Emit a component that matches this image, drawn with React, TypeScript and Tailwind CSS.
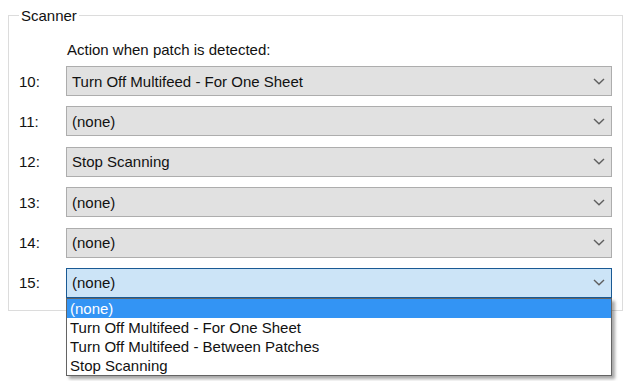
import React from 'react';

const rows: { n: string; value: string }[] = [
  { n: '10:', value: 'Turn Off Multifeed - For One Sheet' },
  { n: '11:', value: '(none)' },
  { n: '12:', value: 'Stop Scanning' },
  { n: '13:', value: '(none)' },
  { n: '14:', value: '(none)' },
  { n: '15:', value: '(none)' },
];

const options = [
  '(none)',
  'Turn Off Multifeed - For One Sheet',
  'Turn Off Multifeed - Between Patches',
  'Stop Scanning',
];

const Chevron: React.FC = () => (
  <svg width="12" height="7" viewBox="0 0 12 7" className="shrink-0">
    <path d="M1 1 L6 5.8 L11 1" fill="none" stroke="#5f5f5f" strokeWidth="1.4" />
  </svg>
);

const App: React.FC = () => {
  return (
    <div
      className="w-[628px] h-[381px] bg-white text-[15px] leading-[17px] text-[#111] pt-[7px] pl-[8px] overflow-hidden"
      style={{ fontFamily: '"Liberation Sans", Arial, sans-serif' }}
    >
      <fieldset className="relative w-[614px] h-[304px] border border-[#dcdcdc] pl-[10px] pr-[10px]">
        <legend className="px-[2px]">Scanner</legend>
        <div className="pl-[48px] pt-[17px] mb-[8px]">Action when patch is detected:</div>
        <div className="flex flex-col gap-[10.4px]">
          {rows.map((r, i) => {
            const active = i === rows.length - 1;
            return (
              <div key={r.n} className="flex items-center">
                <div className="w-[47px] shrink-0">{r.n}</div>
                <div
                  className={
                    'relative flex items-center justify-between h-[30px] w-[546px] pl-[5px] pr-[6px] border ' +
                    (active ? 'bg-[#cce4f7] border-[#1a5a94]' : 'bg-[#e1e1e1] border-[#adadad]')
                  }
                >
                  <span>{r.value}</span>
                  <Chevron />
                  {active && (
                    <div className="absolute left-[-1px] top-[29px] w-[546px] z-10 bg-white border border-[#646464] shadow-[3px_3px_3px_rgba(0,0,0,0.35)]">
                      {options.map((o, j) => (
                        <div
                          key={o}
                          className={
                            'h-[19px] flex items-center pl-[3px] ' +
                            (j === 0 ? 'bg-[#3394f4] text-white' : 'text-[#111]')
                          }
                        >
                          {o}
                        </div>
                      ))}
                    </div>
                  )}
                </div>
              </div>
            );
          })}
        </div>
      </fieldset>
    </div>
  );
};

export default App;
